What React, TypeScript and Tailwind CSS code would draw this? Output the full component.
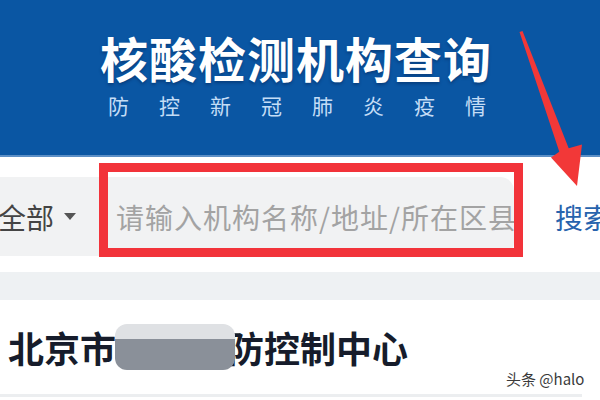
import React from 'react';

const cjk = { fontFamily: '"Noto Sans CJK SC", "Noto Sans", sans-serif' };

const Header = () => (
  <div className="relative h-[157px] bg-[#0a56a3] flex flex-col items-center border-b-2 border-[#5c8fc6]">
    <h1 className="mt-[26px] ml-[-8px] text-[48px] leading-[62px] font-bold tracking-[1px] text-white [text-shadow:0_2px_3px_rgba(0,20,60,0.35)]">
      核酸检测机构查询
    </h1>
    <div className="mt-[2px] ml-[-6px] flex gap-[30px] text-[21px] leading-[30px] text-[#c4ddf6]">
      {'防控新冠肺炎疫情'.split('').map((c, i) => (
        <span key={i}>{c}</span>
      ))}
    </div>
  </div>
);

const SearchRow = () => (
  <div className="flex items-center pt-[20px]">
    <div className="flex items-center h-[79px] w-[540px] ml-[-26px] bg-[#f1f2f3] rounded-[14px]">
      <span className="ml-[24px] text-[28px] text-[#444] whitespace-nowrap">全部</span>
      <span className="ml-[10px] w-0 h-0 border-l-[6px] border-r-[6px] border-t-[7px] border-l-transparent border-r-transparent border-t-[#555]" />
      <span className="ml-[40px] text-[28px] text-[#a3a3a3] tracking-[1px] whitespace-nowrap">请输入机构名称/地址/所在区县</span>
    </div>
    <span className="ml-[41px] text-[28px] text-[#2763ad] whitespace-nowrap">搜索</span>
  </div>
);

const Card = () => (
  <div className="relative bg-white h-[97px] pt-[22px] border-b-[3px] border-[#eceef0] w-[582px]">
    <h2 className="ml-[8px] text-[36px] leading-[50px] font-bold text-[#161c2b] whitespace-nowrap">
      北京市
      <span className="relative inline-block w-[112px] h-[10px]">
        <span className="absolute left-[-1px] top-[-29px] w-[120px] h-[46px] rounded-[12px] overflow-hidden flex flex-col">
          <span className="h-[15px] bg-[#dfe1e4]" />
          <span className="flex-1 bg-[#8a9099]" />
        </span>
      </span>
      防控制中心
    </h2>
  </div>
);

const Arrow = () => (
  <svg className="absolute left-0 top-0 pointer-events-none" width="600" height="400">
    <polygon
      points="519.5,32 522.5,31 568.7,148.3 582,144.5 577,186 551,157.5 559.3,151.7"
      fill="#f23838"
    />
  </svg>
);

export default function App() {
  return (
    <div className="relative w-[600px] h-[400px] overflow-hidden bg-white" style={cjk}>
      <Header />
      <SearchRow />
      <div className="mt-[16px] h-[28px] bg-[#eef1f3]" />
      <Card />
      {/* annotation overlays */}
      <div className="absolute left-[99px] top-[163px] w-[424px] h-[94px] border-[9px] border-[#f2333a]" />
      <Arrow />
      <span className="absolute left-[506px] top-[368px] text-[15px] text-[#3a3a3a] [text-shadow:0_0_2px_#fff]">
        头条 @halo
      </span>
    </div>
  );
}
